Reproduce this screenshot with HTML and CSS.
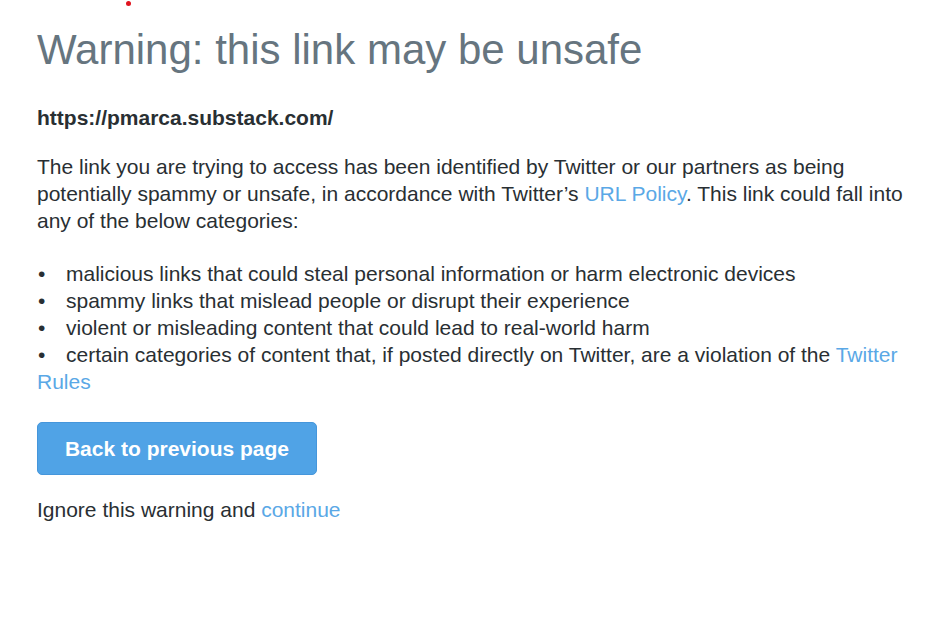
FILE: index.html
```html
<!DOCTYPE html>
<html lang="en">
<head>
  <meta charset="UTF-8">
  <title>Twitter / Warning</title>
  <link rel="stylesheet" href="styles.css">
</head>
<body>
  <span class="dot"></span>
  <div class="warning">
    <h1 class="warning__title">Warning: this link may be unsafe</h1>
    <p class="warning__url">https://pmarca.substack.com/</p>
    <p class="warning__text">The link you are trying to access has been identified by Twitter or our partners as being potentially spammy or unsafe, in accordance with Twitter’s <a href="#">URL Policy</a>. This link could fall into any of the below categories:</p>
    <ul class="warning__list">
      <li>malicious links that could steal personal information or harm electronic devices</li>
      <li>spammy links that mislead people or disrupt their experience</li>
      <li>violent or misleading content that could lead to real-world harm</li>
      <li>certain categories of content that, if posted directly on Twitter, are a violation of the <a href="#">Twitter Rules</a></li>
    </ul>
    <button class="warning__back">Back to previous page</button>
    <p class="warning__ignore">Ignore this warning and <a href="#">continue</a></p>
  </div>
</body>
</html>
```

FILE: styles.css
```css
body {
  margin: 0;
  font-family: 'Liberation Sans', Arial, sans-serif;
  color: #292f33;
  background: #fff;
}

a {
  color: #5aa8e6;
  text-decoration: none;
}

.dot {
  position: absolute;
  left: 126px;
  top: 1px;
  width: 5px;
  height: 5px;
  border-radius: 50%;
  background: #e0141e;
}

.warning {
  padding: 26px 37px 0;
  font-size: 21px;
  line-height: 27px;
  max-width: 870px;
}

.warning p {
  margin: 0;
}

.warning__title {
  margin: 0 0 30px;
  font-size: 42px;
  font-weight: normal;
  line-height: 48px;
  color: #66757f;
}

.warning .warning__url {
  margin-bottom: 22px;
  font-weight: bold;
}

.warning .warning__text {
  margin-bottom: 26px;
}

.warning__list {
  margin: 0 0 27px;
  padding: 0;
  list-style: none;
}

.warning__list li::before {
  content: "•";
  display: inline-block;
  width: 28px;
  padding-left: 1px;
}

.warning__back {
  display: block;
  width: 280px;
  height: 53px;
  margin: 0 0 21px;
  padding: 0;
  font-family: inherit;
  font-size: 21px;
  font-weight: bold;
  color: #fff;
  background: #50a3e6;
  border: 1px solid #4596db;
  border-radius: 5px;
}
```
